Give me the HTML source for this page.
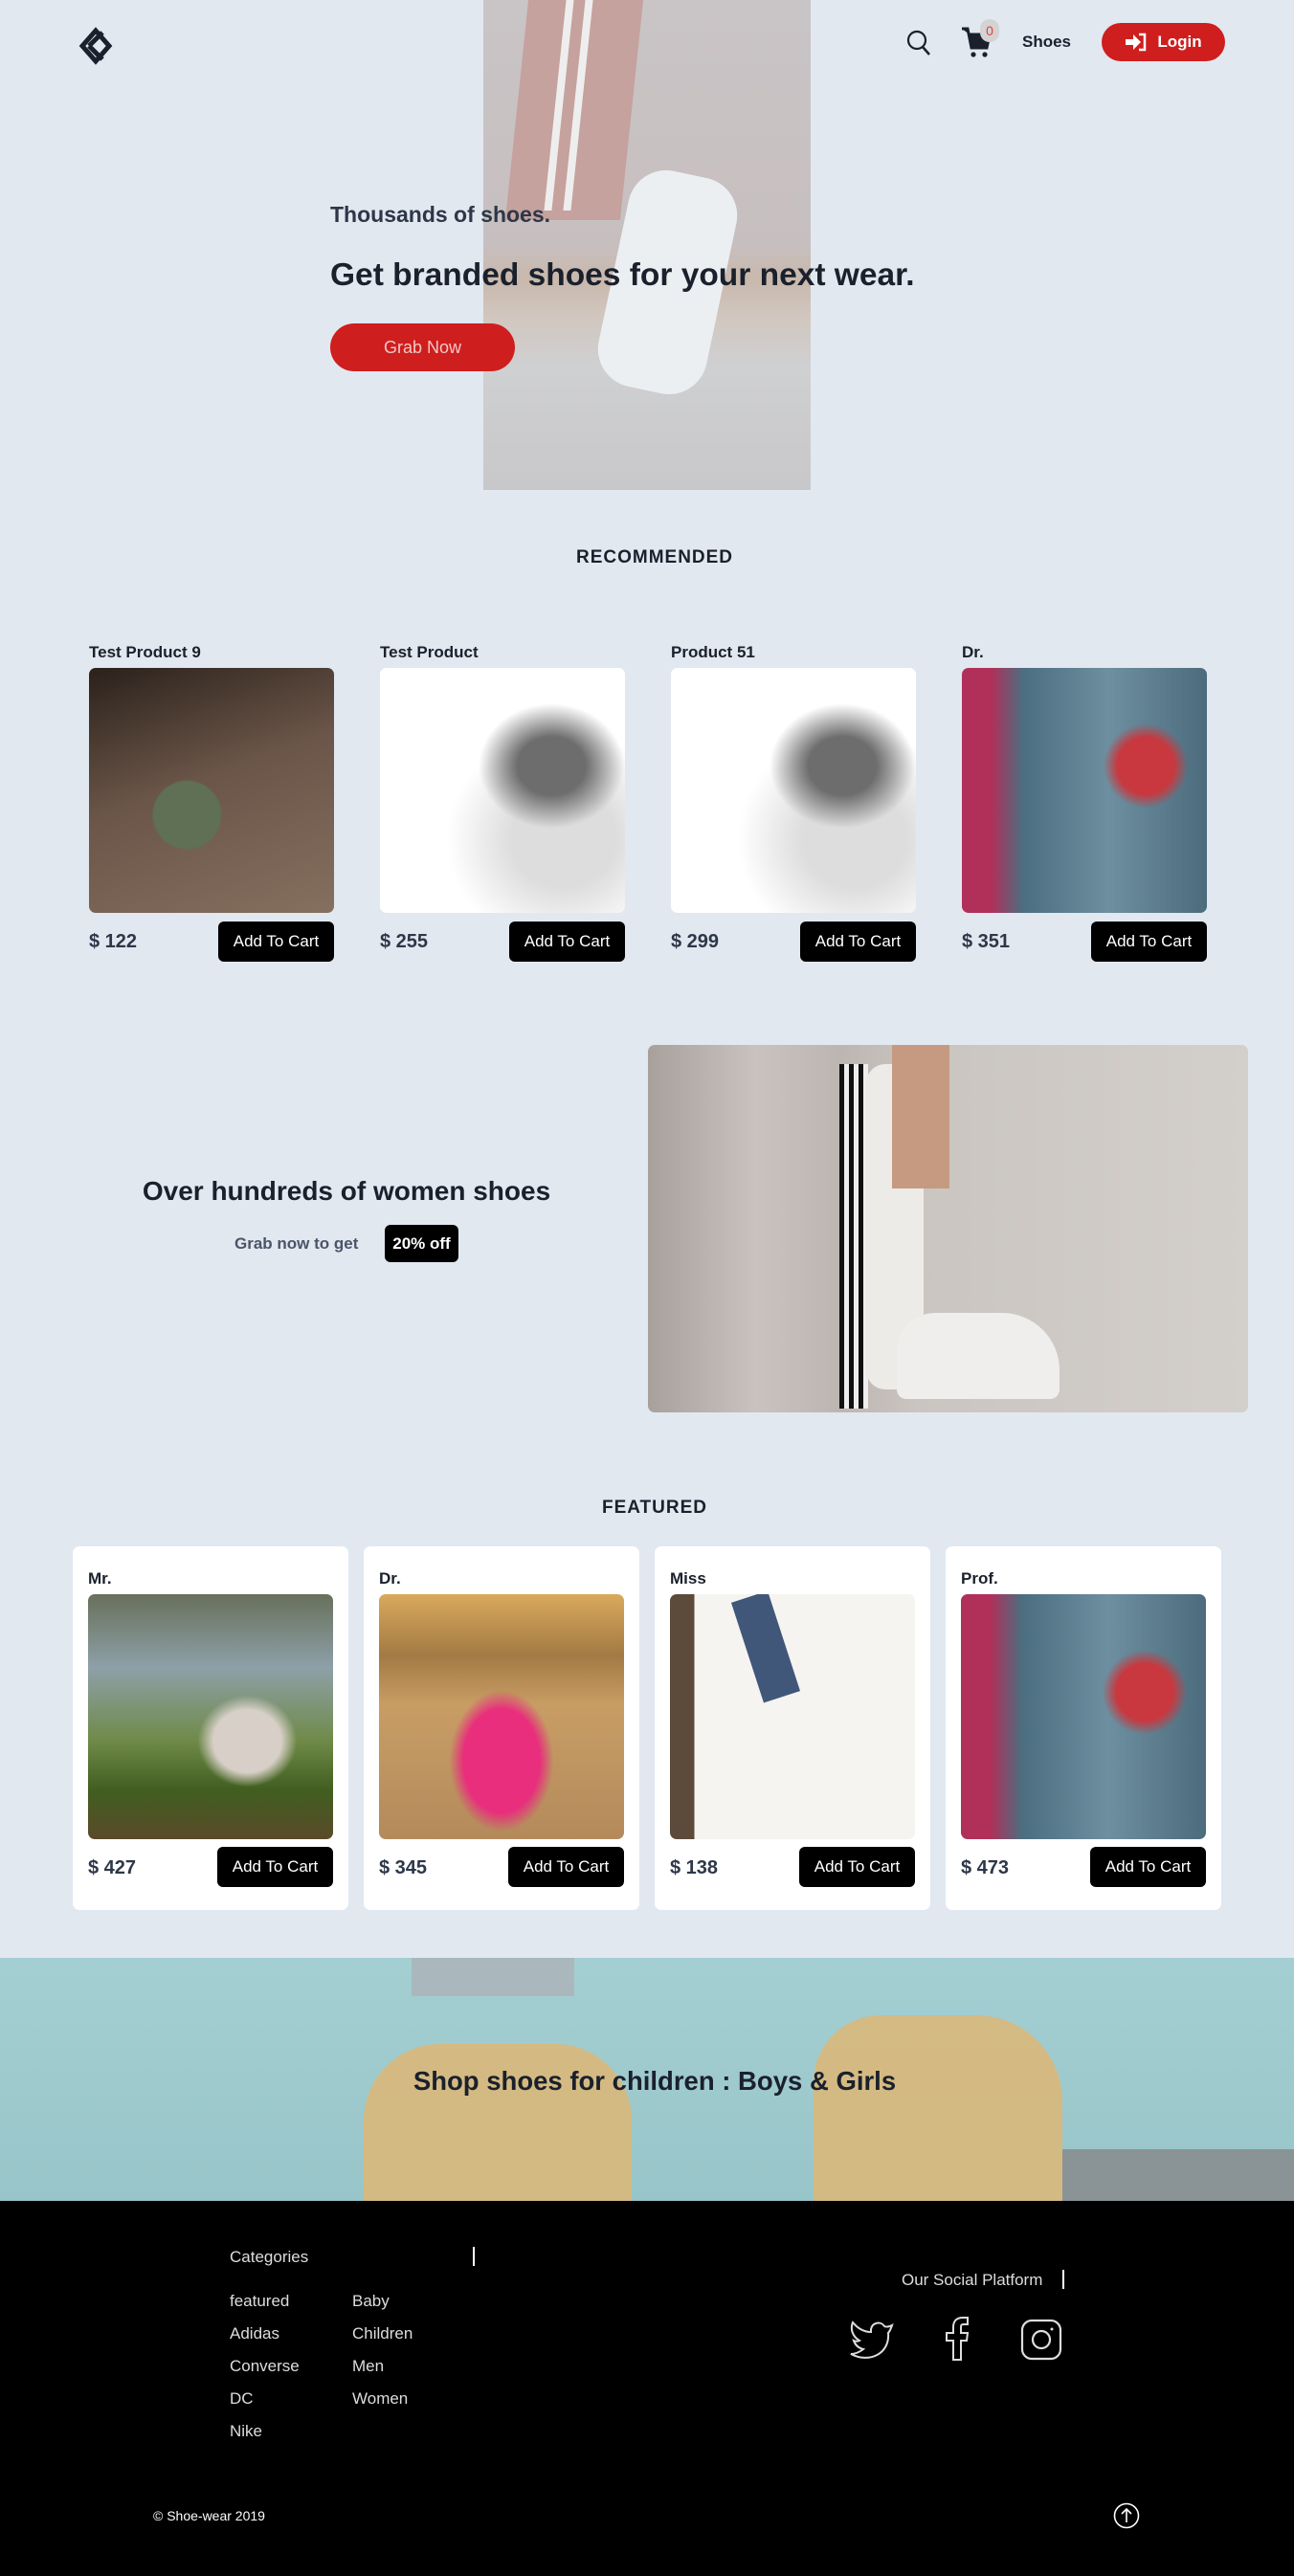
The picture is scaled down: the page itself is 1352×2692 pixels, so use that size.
<!DOCTYPE html>
<html><head><meta charset="utf-8"><style>
*{margin:0;padding:0;box-sizing:border-box}
body{width:1352px;height:2692px;background:#e2e8f0;font-family:"Liberation Sans",sans-serif;color:#1a202c;position:relative;overflow:hidden}
.a{position:absolute}
.btn{position:absolute;background:#000;color:#fff;border-radius:6px;font-size:17px;display:flex;align-items:center;justify-content:center}
.t{position:absolute;font-weight:bold;font-size:17px;color:#1a202c}
.p{position:absolute;font-weight:bold;font-size:20px;color:#2d3748}
.img{position:absolute;border-radius:7px;overflow:hidden}
.card{position:absolute;background:#fff;border-radius:7px}
.f{position:absolute;color:#ddd;font-size:17px}
</style></head><body>
<!-- hero image -->
<div class="a" style="left:505px;top:0;width:342px;height:512px;background:linear-gradient(180deg,#c9c4c6 0%,#c7bfbf 50%,#c9b8ac 57%,#d1c7c0 65%,#cfd0d2 75%,#c8c7c9 100%)"></div>
<div class="a" style="left:540px;top:0;width:120px;height:230px;background:#c49a94;transform:skewX(-6deg);opacity:.8"></div>
<div class="a" style="left:580px;top:0;width:8px;height:220px;background:#eee;transform:skewX(-6deg)"></div>
<div class="a" style="left:600px;top:0;width:8px;height:220px;background:#eee;transform:skewX(-6deg)"></div>
<div class="a" style="left:640px;top:180px;width:115px;height:230px;background:#eceff2;border-radius:40px;transform:rotate(12deg)"></div>
<!-- logo -->
<svg class="a" style="left:80px;top:28px" width="40" height="40" viewBox="0 0 40 40"><path d="M20 4 L34 20 L20 36 L6 20 Z M13 20 L27 6 M13 20 L27 34" fill="none" stroke="#1a202c" stroke-width="5"/></svg>
<!-- nav -->
<svg class="a" style="left:946px;top:30px" width="28" height="30" viewBox="0 0 28 30"><circle cx="12" cy="12" r="9" fill="none" stroke="#1a202c" stroke-width="2.2"/><path d="M18 19 L25 27" stroke="#1a202c" stroke-width="2.5"/></svg>
<svg class="a" style="left:1003px;top:26px" width="34" height="36" viewBox="0 0 34 36"><path d="M2 4 H8 L12 24 H28 L31 10 H10" fill="#1a202c" stroke="#1a202c" stroke-width="3"/><circle cx="14" cy="31" r="2.6" fill="#1a202c"/><circle cx="26" cy="31" r="2.6" fill="#1a202c"/></svg>
<div class="a" style="left:1024px;top:20px;width:20px;height:24px;border-radius:10px;background:#d3d3d3;color:#e53e3e;font-size:14px;text-align:center;line-height:24px">0</div>
<div class="a" style="left:1068px;top:34px;font-size:17px;font-weight:bold">Shoes</div>
<div class="a" style="left:1151px;top:24px;width:129px;height:40px;border-radius:20px;background:#cf1e1e;color:#fff;font-weight:bold;font-size:17px;display:flex;align-items:center;justify-content:center;gap:10px"><svg width="24" height="20" viewBox="0 0 24 20"><path d="M1 7 H9 V2 L17 10 L9 18 V13 H1 Z" fill="#fff"/><path d="M15 2 H21 V18 H15" fill="none" stroke="#fff" stroke-width="2.5"/></svg>Login</div>
<!-- hero text -->
<div class="a" style="left:345px;top:211px;font-size:23px;font-weight:bold;color:#2d3748">Thousands of shoes.</div>
<div class="a" style="left:345px;top:269px;font-size:33.5px;font-weight:bold;color:#1a202c">Get branded shoes for your next wear.</div>
<div class="a" style="left:345px;top:338px;width:193px;height:50px;border-radius:25px;background:#cf1e1e;color:#f3c7c7;font-size:18px;display:flex;align-items:center;justify-content:center">Grab Now</div>
<!-- recommended -->
<div class="a" style="left:0;width:1368px;top:572px;text-align:center;font-weight:bold;font-size:19px;letter-spacing:1px">RECOMMENDED</div>
<div class="t" style="left:93px;top:672px">Test Product 9</div>
<div class="t" style="left:397px;top:672px">Test Product</div>
<div class="t" style="left:701px;top:672px">Product 51</div>
<div class="t" style="left:1005px;top:672px">Dr.</div>
<div class="img" style="left:93px;top:698px;width:256px;height:256px;background:radial-gradient(ellipse at 40% 60%,#5f7054 0 16%,transparent 17%),linear-gradient(160deg,#2a211b 0%,#6a5548 45%,#85705f 100%)"></div>
<div class="img" style="left:397px;top:698px;width:256px;height:256px;background:radial-gradient(ellipse at 70% 40%,#6d6d6d 0 14%,transparent 30%),radial-gradient(ellipse at 75% 70%,#ddd 0 20%,#fff 45%)"></div>
<div class="img" style="left:701px;top:698px;width:256px;height:256px;background:radial-gradient(ellipse at 70% 40%,#6d6d6d 0 14%,transparent 30%),radial-gradient(ellipse at 75% 70%,#ddd 0 20%,#fff 45%)"></div>
<div class="img" style="left:1005px;top:698px;width:256px;height:256px;background:radial-gradient(circle at 75% 40%,#c8383e 0 12%,transparent 18%),linear-gradient(90deg,#b0305a 0 12%,#4b6e80 25%,#6d8fa0 60%,#4c6c7d 100%)"></div>
<div class="p" style="left:93px;top:973px">$ 122</div><div class="btn" style="left:228px;top:963px;width:121px;height:42px">Add To Cart</div>
<div class="p" style="left:397px;top:973px">$ 255</div><div class="btn" style="left:532px;top:963px;width:121px;height:42px">Add To Cart</div>
<div class="p" style="left:701px;top:973px">$ 299</div><div class="btn" style="left:836px;top:963px;width:121px;height:42px">Add To Cart</div>
<div class="p" style="left:1005px;top:973px">$ 351</div><div class="btn" style="left:1140px;top:963px;width:121px;height:42px">Add To Cart</div>
<!-- banner -->
<div class="a" style="left:0;width:724px;top:1229px;text-align:center;font-size:28px;font-weight:bold">Over hundreds of women shoes</div>
<div class="a" style="left:245px;top:1290px;font-size:17px;font-weight:bold;color:#4a5568">Grab now to get</div>
<div class="a" style="left:402px;top:1280px;width:77px;height:39px;border-radius:6px;background:#000;color:#fff;font-weight:bold;font-size:17px;display:flex;align-items:center;justify-content:center">20% off</div>
<div class="img" style="left:677px;top:1092px;width:627px;height:384px;background:linear-gradient(90deg,#a8a09b 0%,#c9c2be 18%,#bdb5b1 32%,#cac5c0 45%,#d3cfcb 100%)">
<div class="a" style="left:200px;top:20px;width:30px;height:360px;background:repeating-linear-gradient(90deg,#111 0 5px,#eee 5px 10px)"></div>
<div class="a" style="left:228px;top:20px;width:60px;height:340px;background:#ecebe8;border-radius:20px"></div>
<div class="a" style="left:255px;top:0;width:60px;height:150px;background:#c59a80"></div>
<div class="a" style="left:260px;top:280px;width:170px;height:90px;background:#efeeec;border-radius:40px 60px 10px 10px"></div>
</div>
<!-- featured -->
<div class="a" style="left:0;width:1368px;top:1565px;text-align:center;font-weight:bold;font-size:19px;letter-spacing:1px">FEATURED</div>
<div class="card" style="left:76px;top:1616px;width:288px;height:380px"></div>
<div class="card" style="left:380px;top:1616px;width:288px;height:380px"></div>
<div class="card" style="left:684px;top:1616px;width:288px;height:380px"></div>
<div class="card" style="left:988px;top:1616px;width:288px;height:380px"></div>
<div class="t" style="left:92px;top:1640px">Mr.</div>
<div class="t" style="left:396px;top:1640px">Dr.</div>
<div class="t" style="left:700px;top:1640px">Miss</div>
<div class="t" style="left:1004px;top:1640px">Prof.</div>
<div class="img" style="left:92px;top:1666px;width:256px;height:256px;background:radial-gradient(ellipse at 65% 60%,#d8d0c8 0 15%,transparent 22%),linear-gradient(180deg,#67705a 0%,#8ea0a8 30%,#6f8a48 60%,#415e20 80%,#5a4a2a 100%)"></div>
<div class="img" style="left:396px;top:1666px;width:256px;height:256px;background:radial-gradient(ellipse at 50% 68%,#e82e7c 0 22%,transparent 30%),linear-gradient(180deg,#d9a95c 0%,#a37a44 25%,#c89d64 45%,#b48a5c 100%)"></div>
<div class="img" style="left:700px;top:1666px;width:256px;height:256px;background:linear-gradient(90deg,#5c4a3a 0 10%,#f5f4f0 10% 100%)"><div class="a" style="left:80px;top:0;width:40px;height:110px;background:#40577a;transform:rotate(-18deg)"></div></div>
<div class="img" style="left:1004px;top:1666px;width:256px;height:256px;background:radial-gradient(circle at 75% 40%,#c8383e 0 12%,transparent 18%),linear-gradient(90deg,#b0305a 0 12%,#4b6e80 25%,#6d8fa0 60%,#4c6c7d 100%)"></div>
<div class="p" style="left:92px;top:1941px">$ 427</div><div class="btn" style="left:227px;top:1930px;width:121px;height:42px">Add To Cart</div>
<div class="p" style="left:396px;top:1941px">$ 345</div><div class="btn" style="left:531px;top:1930px;width:121px;height:42px">Add To Cart</div>
<div class="p" style="left:700px;top:1941px">$ 138</div><div class="btn" style="left:835px;top:1930px;width:121px;height:42px">Add To Cart</div>
<div class="p" style="left:1004px;top:1941px">$ 473</div><div class="btn" style="left:1139px;top:1930px;width:121px;height:42px">Add To Cart</div>
<!-- children banner -->
<div class="a" style="left:0;top:2046px;width:1352px;height:254px;background:linear-gradient(180deg,#a4cfd2,#98c5c9);overflow:hidden">
<div class="a" style="left:430px;top:0;width:170px;height:40px;background:#aab8bd"></div>
<div class="a" style="left:380px;top:90px;width:280px;height:200px;background:#d9b87a;border-radius:80px 80px 0 0;opacity:.9"></div>
<div class="a" style="left:850px;top:60px;width:260px;height:230px;background:#d9b87a;border-radius:70px 90px 0 0;opacity:.9"></div>
<div class="a" style="left:1110px;top:200px;width:250px;height:60px;background:#8a9396"></div>
</div>
<div class="a" style="left:0;width:1368px;top:2159px;text-align:center;font-size:27.5px;font-weight:bold;color:#1a202c">Shop shoes for children : Boys &amp; Girls</div>
<!-- footer -->
<div class="a" style="left:0;top:2300px;width:1352px;height:392px;background:#000"></div>
<div class="f" style="left:240px;top:2349px">Categories</div>
<div class="a" style="left:494px;top:2348px;width:2px;height:20px;background:#fff"></div>
<div class="f" style="left:240px;top:2395px">featured</div><div class="f" style="left:368px;top:2395px">Baby</div>
<div class="f" style="left:240px;top:2429px">Adidas</div><div class="f" style="left:368px;top:2429px">Children</div>
<div class="f" style="left:240px;top:2463px">Converse</div><div class="f" style="left:368px;top:2463px">Men</div>
<div class="f" style="left:240px;top:2497px">DC</div><div class="f" style="left:368px;top:2497px">Women</div>
<div class="f" style="left:240px;top:2531px">Nike</div>
<div class="f" style="left:942px;top:2373px">Our Social Platform</div>
<div class="a" style="left:1110px;top:2372px;width:2px;height:20px;background:#fff"></div>
<svg class="a" style="left:888px;top:2424px" width="46" height="42" viewBox="0 0 46 42"><path d="M44 6 C40 8 38 8 36 7 C33 2 24 2 22 10 L22 13 C14 13 8 9 3 3 C0 10 3 18 10 22 C8 23 6 23 4 22 C6 28 10 30 14 31 C10 34 6 36 1 36 C20 46 42 36 40 14 C42 12 43 9 44 6 Z" fill="none" stroke="#ddd" stroke-width="2"/></svg>
<svg class="a" style="left:984px;top:2420px" width="32" height="48" viewBox="0 0 32 48"><path d="M12 46 V26 H5 V18 H12 V12 C12 5 16 2 22 2 H27 V9 H23 C20 9 20 10 20 13 V18 H27 L26 26 H20 V46 Z" fill="none" stroke="#ddd" stroke-width="2"/></svg>
<svg class="a" style="left:1066px;top:2423px" width="44" height="44" viewBox="0 0 44 44"><rect x="2" y="2" width="40" height="40" rx="10" fill="none" stroke="#ddd" stroke-width="2.2"/><circle cx="22" cy="22" r="9" fill="none" stroke="#ddd" stroke-width="2.2"/><circle cx="33" cy="11" r="1.5" fill="#ddd"/></svg>
<div class="a" style="left:160px;top:2621px;color:#fff;font-size:14px">© Shoe-wear 2019</div>
<svg class="a" style="left:1162px;top:2614px" width="30" height="30" viewBox="0 0 30 30"><circle cx="15" cy="15" r="12.5" fill="none" stroke="#fff" stroke-width="1.6"/><path d="M15 22 V8 M10 13 L15 8 L20 13" fill="none" stroke="#fff" stroke-width="1.6"/></svg>
</body></html>
